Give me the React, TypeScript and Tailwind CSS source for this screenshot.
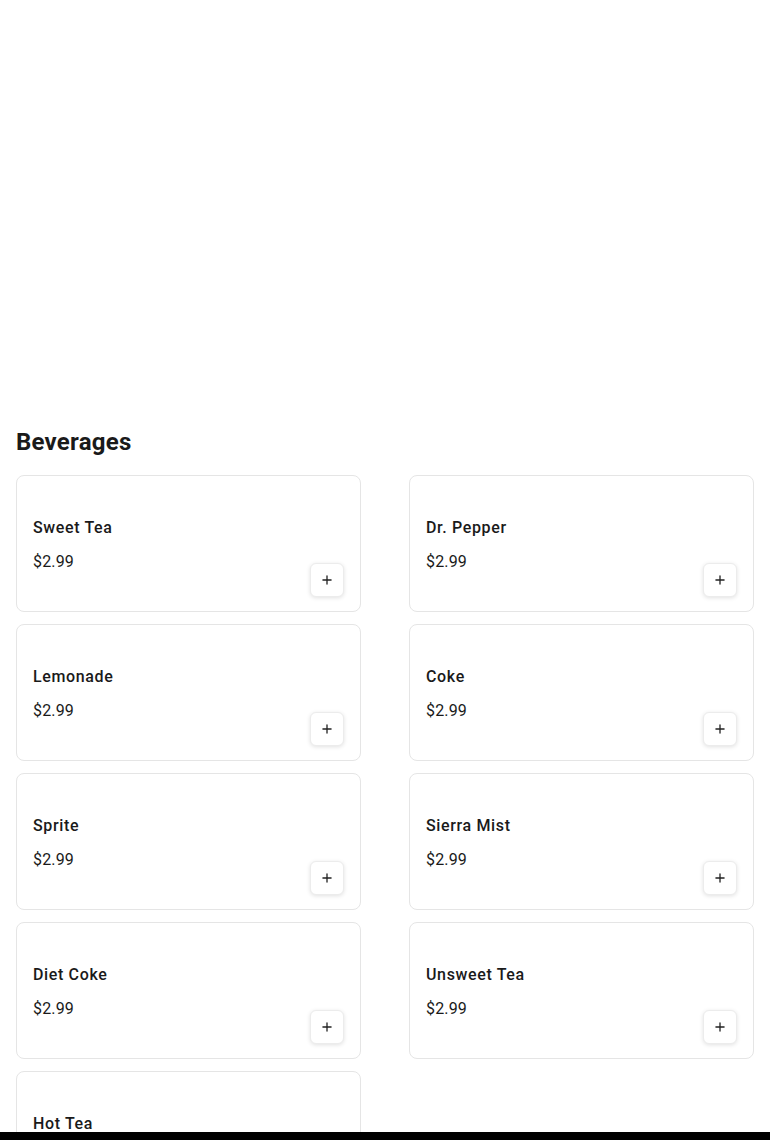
import { Plus } from 'lucide-react';

const items = [
  'Sweet Tea',
  'Dr. Pepper',
  'Lemonade',
  'Coke',
  'Sprite',
  'Sierra Mist',
  'Diet Coke',
  'Unsweet Tea',
  'Hot Tea',
];

function ItemCard({ name }: { name: string }) {
  return (
    <div className="flex min-h-[137px] justify-between rounded-lg border border-[#e5e5e5] bg-white px-4 pt-4 pb-[14px]">
      <div className="flex flex-col pt-[24px]">
        <div className="text-base leading-6 font-medium tracking-[0.04em] text-[#1a1a1a]">{name}</div>
        <div className="mt-[10px] text-base leading-6 tracking-[0.01em] text-[#1a1a1a]">$2.99</div>
      </div>
      <button className="flex h-[34px] w-[34px] items-center justify-center self-end rounded-md border border-[#ececec] bg-white shadow-[0_1px_4px_rgba(0,0,0,0.12)]">
        <Plus size={14} strokeWidth={2.25} className="text-[#222]" />
      </button>
    </div>
  );
}

export default function App() {
  return (
    <div className="min-h-screen bg-white font-['Roboto',sans-serif] text-[#1a1a1a]">
      <div className="h-[425px]" />
      <div className="px-4">
        <h2 className="pt-px text-2xl leading-8 font-bold tracking-[0.01em]">Beverages</h2>
        <div className="mt-[17px] grid grid-cols-2 gap-x-12 gap-y-3">
          {items.map((n) => (
            <ItemCard key={n} name={n} />
          ))}
        </div>
      </div>
      <div className="fixed inset-x-0 bottom-0 h-2 bg-black" />
    </div>
  );
}
